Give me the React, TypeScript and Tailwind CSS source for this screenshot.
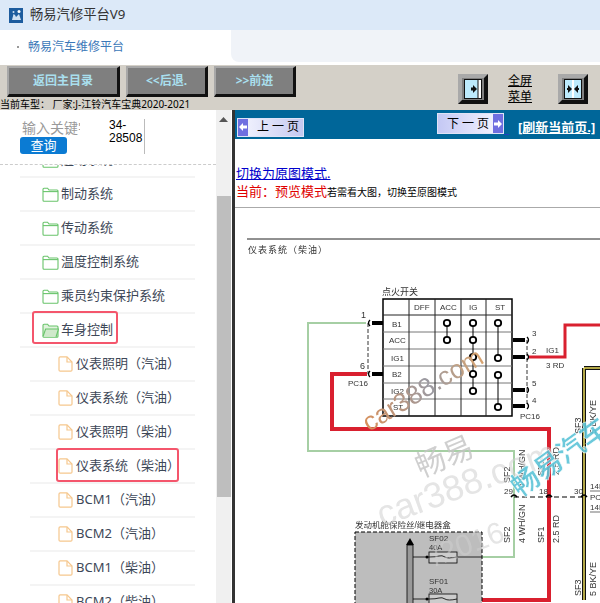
import type { ReactNode } from 'react'

const cjk = "font-['Noto_Sans','Noto_Sans_CJK_SC',sans-serif]"

type TreeRow = { label: string; kind: 'folder' | 'open' | 'file'; mark?: boolean }

const rows: TreeRow[] = [
  { label: '起动系统', kind: 'folder' },
  { label: '制动系统', kind: 'folder' },
  { label: '传动系统', kind: 'folder' },
  { label: '温度控制系统', kind: 'folder' },
  { label: '乘员约束保护系统', kind: 'folder' },
  { label: '车身控制', kind: 'open', mark: true },
  { label: '仪表照明（汽油）', kind: 'file' },
  { label: '仪表系统（汽油）', kind: 'file' },
  { label: '仪表照明（柴油）', kind: 'file' },
  { label: '仪表系统（柴油）', kind: 'file', mark: true },
  { label: 'BCM1（汽油）', kind: 'file' },
  { label: 'BCM2（汽油）', kind: 'file' },
  { label: 'BCM1（柴油）', kind: 'file' },
  { label: 'BCM2（柴油）', kind: 'file' },
]

const FolderIcon = ({ open }: { open?: boolean }) => (
  <svg width="17" height="15" viewBox="0 0 17 15" fill="none" stroke="#69c46b" strokeWidth="1.1" className="shrink-0">
    <path d="M1 13.2V2.2q0-1 1-1h3.6l1.4 1.8h8q1 0 1 1v9.2q0 1-1 1H2q-1 0-1-1z" fill={open ? '#dff2dc' : 'none'} />
    {open ? <path d="M1 13.5 3.6 6h12.9L14 14" fill="#cfe9cb" /> : <path d="M1 4.6h15" />}
  </svg>
)

const FileIcon = () => (
  <svg width="15" height="16" viewBox="0 0 15 16" fill="none" stroke="#f6c78d" strokeWidth="1.2" className="shrink-0">
    <path d="M1 2q0-1.2 1.2-1.2H9L14 6v8q0 1.2-1.2 1.2H2.2Q1 15.2 1 14z" />
    <path d="M9 1v5h5" />
  </svg>
)

const Tree = ({ row }: { row: TreeRow }) => {
  const isFile = row.kind === 'file'
  return (
    <li
      className={
        isFile
          ? 'relative ml-[30px] flex h-[34px] w-[165px] items-center gap-[3px] border-b-2 border-[#f4f4f4] pl-[28px]'
          : 'relative ml-[20px] flex h-[34px] w-[175px] items-center gap-[2px] border-b-2 border-[#f4f4f4] pl-[22px]'
      }
    >
      {isFile ? <FileIcon /> : <FolderIcon open={row.kind === 'open'} />}
      <span className="whitespace-nowrap text-[13px] text-[#3d4757]">{row.label}</span>
      {row.mark ? (
        <span
          className={
            isFile
              ? 'absolute -top-[2px] left-[26px] h-[34px] w-[123px] rounded-[3px] border-2 border-[#f4566c]'
              : 'absolute -top-[3px] left-[12px] h-[33px] w-[86px] rounded-[3px] border-2 border-[#f4566c]'
          }
        />
      ) : null}
    </li>
  )
}

const ToolButton = ({ width, children }: { width: string; children: ReactNode }) => (
  <button
    className={`${width} flex h-[31px] items-center justify-center border-t-2 border-l-2 border-r-[3px] border-b-[3px] border-t-[#a8a8a8] border-l-[#a8a8a8] border-r-[#111] border-b-[#111] bg-[#7f7f7f] text-[12px] font-bold text-[#a9dfee]`}
  >
    {children}
  </button>
)

const PanelIcon = ({ double }: { double?: boolean }) => (
  <div className="flex h-[30px] w-[30px] items-center justify-center border-[4px] border-t-[#a9a9a9] border-l-[#a9a9a9] border-r-[#111] border-b-[#111] bg-[#808080]">
    <svg width="18" height="20" viewBox="0 0 18 20">
      <rect x="0.5" y="0.5" width="17" height="19" fill="#bdeafc" stroke="#111" />
      {double ? (
        <>
          <rect x="8" y="1" width="2" height="18" fill="#fff" />
          <path d="M3 10h1M15 10h-1" stroke="#111" strokeWidth="2" />
          <path d="M4 6l4 4-4 4z" fill="#111" />
          <path d="M14 6l-4 4 4 4z" fill="#111" />
        </>
      ) : (
        <>
          <rect x="14" y="1" width="3" height="18" fill="#fff" />
          <path d="M14 1v18" stroke="#111" />
          <path d="M7 10h2" stroke="#111" strokeWidth="3" />
          <path d="M9 6l4 4-4 4z" fill="#111" />
        </>
      )}
    </svg>
  </div>
)

const PageButton = ({ label, dir }: { label: string; dir: 'prev' | 'next' }) => {
  const arrow = (
    <span className="flex h-full w-[10px] shrink-0 items-center justify-center bg-[#6f6fe0]">
      <svg width="8" height="8" viewBox="0 0 8 8" fill="#fff">
        <path d={dir === 'prev' ? 'M4 0 0 4l4 4V5.500h4v-3H4z' : 'M4 0l4 4-4 4V5.500H0v-3h4z'} />
      </svg>
    </span>
  )
  return (
    <button
      className={
        dir === 'prev'
          ? 'flex h-[19px] w-[67px] items-center border border-[#dfe3f6] bg-gradient-to-r from-[#f6f7ff] to-[#c4c8f0] text-[12px] text-black'
          : 'flex h-[21px] w-[67px] items-center border border-[#dfe3f6] bg-gradient-to-r from-[#c4c8f4] to-[#f8f8ff] text-[12px] text-black'
      }
    >
      {dir === 'prev' ? arrow : null}
      <span className="flex-1 whitespace-nowrap pl-[9px] text-left tracking-[3px]">{label}</span>
      {dir === 'next' ? arrow : null}
    </button>
  )
}

const Pin = ({ x, y, side }: { x: number; y: number; side: 'l' | 'r' }) => (
  <g>
    <path d={side === 'l' ? `M${x} ${y}h11` : `M${x} ${y}h-12`} stroke="#000" strokeWidth="4" />
    <path
      d={side === 'l' ? `M${x - 2} ${y - 3}q-3 3 0 6` : `M${x + 2} ${y - 3}q3 3 0 6`}
      stroke="#000"
      strokeWidth="1.300"
      fill="none"
    />
  </g>
)

const Contact = ({ x, y }: { x: number; y: number }) => (
  <circle cx={x} cy={y} r="3.200" fill="#fff" stroke="#000" strokeWidth="1.800" />
)

const Vert = ({ x, y, t, size = 9 }: { x: number; y: number; t: string; size?: number }) => (
  <text x={x} y={y} fontSize={size} fill="#333" transform={`rotate(-90 ${x} ${y})`}>
    {t}
  </text>
)

const Label = ({ x, y, t, size = 8 }: { x: number; y: number; t: string; size?: number }) => (
  <text x={x} y={y} fontSize={size} fill="#333">
    {t}
  </text>
)

const Wiring = () => {
  const colX = [409, 435, 461, 486]
  const rowY = [315, 332, 349, 366, 383, 399]
  return (
    <svg viewBox="235 235 365 368" width="365" height="368" className="block blur-[0.3px] font-['Liberation_Sans','Noto_Sans_CJK_SC',sans-serif]">
      <defs>
        <linearGradient id="wm" x1="0" x2="1" y1="0" y2="0">
          <stop offset="0" stopColor="#d9905a" />
          <stop offset="0.55" stopColor="#9b9aa2" />
          <stop offset="1" stopColor="#d9a36e" />
        </linearGradient>
      </defs>
      <path d="M247 239H600" stroke="#222" strokeWidth="1" />
      <text x="248" y="253" fontSize="9" letterSpacing="1" fill="#333">
        仪表系统（柴油）
      </text>

      <path d="M366 323H308V451H514V557H482" fill="none" stroke="#a6cfa4" strokeWidth="2" />
      <path d="M367 374H332V429H549V600H482" fill="none" stroke="#d9202f" strokeWidth="4" />
      <path d="M529 357H565V325H600" fill="none" stroke="#d9202f" strokeWidth="3" />
      <path d="M584 368H600M584 368V600" fill="none" stroke="#111" strokeWidth="4" />
      <path d="M584 368H600M584 368V600" fill="none" stroke="#e8d95a" strokeWidth="1.500" />
      <path d="M368 323V374M527 340V406" stroke="#000" strokeWidth="0.800" strokeDasharray="4 2" />
      <path d="M514 497H584" stroke="#000" strokeWidth="1" strokeDasharray="5 3" />
      <path d="M511 497q3-4 6 0M546 497q3-4 6 0M581 497q3-4 6 0" fill="none" stroke="#000" strokeWidth="1.500" />

      <text x="382" y="295" fontSize="9" fill="#333">
        点火开关
      </text>
      <rect x="383" y="299" width="129" height="117" fill="#fff" stroke="#000" strokeWidth="1.500" />
      {rowY.map((y, i) => (
        <path key={y} d={`M383 ${y}H512`} stroke={i === 0 ? '#222' : '#777'} strokeWidth="1" />
      ))}
      {colX.map((x) => (
        <path key={x} d={`M${x} 299V416`} stroke="#222" strokeWidth="1" />
      ))}
      <Label x={414} y={310} t="DFF" />
      <Label x={440} y={310} t="ACC" />
      <Label x={469} y={310} t="IG" />
      <Label x={495} y={310} t="ST" />
      <Label x={392} y={327} t="B1" />
      <Label x={389} y={343} t="ACC" />
      <Label x={391} y={361} t="IG1" />
      <Label x={392} y={377} t="B2" />
      <Label x={391} y={394} t="IG2" />
      <Label x={393} y={410} t="ST" />
      <path d="M447 323V340M473 323V391M498 323V358M498 375V407" stroke="#000" strokeWidth="1" />
      {[
        [447, 323],
        [447, 340],
        [473, 323],
        [473, 340],
        [473, 357],
        [473, 374],
        [473, 391],
        [498, 323],
        [498, 358],
        [498, 375],
        [498, 407],
      ].map(([x, y]) => (
        <Contact key={`${x}-${y}`} x={x} y={y} />
      ))}

      <Pin x={372} y={323} side="l" />
      <Pin x={372} y={374} side="l" />
      <Pin x={525} y={340} side="r" />
      <Pin x={525} y={357} side="r" />
      <Pin x={525} y={390} side="r" />
      <Pin x={525} y={406} side="r" />
      <Label x={361} y={318} t="1" size={9} />
      <Label x={360} y={369} t="6" size={9} />
      <Label x={348} y={386} t="PC16" />
      <Label x={532} y={336} t="3" />
      <Label x={532} y={354} t="2" />
      <Label x={532} y={386} t="5" />
      <Label x={532} y={403} t="4" />
      <Label x={520} y={419} t="PC16" />
      <Label x={546} y={353} t="IG1" />
      <Label x={546} y={368} t="3 RD" />

      <Vert x={510} y={483} t="SF2" />
      <Vert x={525} y={488} t="4 WH/GN" />
      <Vert x={544} y={476} t="SF1" />
      <Vert x={559} y={475} t="2.5 RD" />
      <Vert x={581} y={434} t="SF3" />
      <Vert x={596} y={434} t="5 BK/YE" />
      <Vert x={510} y={543} t="SF2" />
      <Vert x={525} y={543} t="4 WH/GN" />
      <Vert x={544} y={543} t="SF1" />
      <Vert x={559} y={543} t="2.5 RD" />
      <Vert x={581} y={596} t="SF3" />
      <Vert x={596} y={596} t="5 BK/YE" />
      <Label x={504} y={494} t="29" />
      <Label x={539} y={494} t="18" />
      <Label x={574} y={494} t="30" />
      <Label x={590} y={500} t="PC" />
      <Label x={590} y={489} t="14K" />
      <Label x={590} y={510} t="14K" />
      <path d="M590 491H600M590 512H600" stroke="#333" strokeWidth="0.700" />

      <text x="355" y="528" fontSize="8.500" fill="#333">
        发动机舱保险丝/继电器盒
      </text>
      <rect x="355" y="532" width="127" height="75" fill="#bdbdbd" stroke="#000" strokeWidth="1" strokeDasharray="4 2" />
      <path d="M407 545h6v60h-6z" fill="#999" stroke="#000" strokeWidth="0.800" />
      <path d="M410 538l-4 7h8z" fill="#000" />
      <path d="M413 557h16M413 599h16" stroke="#000" strokeWidth="0.800" />
      <circle cx="427" cy="557" r="1.500" fill="#000" />
      <circle cx="427" cy="599" r="1.500" fill="#000" />
      <rect x="429" y="552" width="28" height="11" fill="#ccc" stroke="#000" strokeWidth="0.800" />
      <rect x="429" y="594" width="28" height="11" fill="#ccc" stroke="#000" strokeWidth="0.800" />
      <path d="M429 557q7 0 10-1t6 1 12 0M457 557h25M429 599q7 0 10-1t6 1 12 0" fill="none" stroke="#000" strokeWidth="0.800" />
      <Label x={429} y={541} t="SF02" />
      <Label x={429} y={550} t="40A" size={7.500} />
      <Label x={429} y={584} t="SF01" />
      <Label x={429} y={593} t="30A" size={7.500} />

      <text x="0" y="0" fontSize="26" fill="url(#wm)" transform="translate(369 432) rotate(-31)">
        car388.com
      </text>
      <text x="0" y="0" fontSize="30" fill="#c4c4c4" opacity="0.8" transform="translate(421 478) rotate(-23)">
        畅易
      </text>
      <text x="0" y="0" fontSize="36" fill="#cfcfcf" opacity="0.55" transform="translate(382 527) rotate(-20)">
        car388.com
      </text>
      <text x="0" y="0" fontSize="30" fill="#cfcfcf" opacity="0.55" transform="translate(436 566) rotate(-20)">
        /2016
      </text>
      <text x="0" y="0" fontSize="28" fontWeight="700" fill="#5cc4d8" stroke="#fff" strokeWidth="0.500" opacity="0.9" transform="translate(520 498) rotate(-36)">
        畅易汽车
      </text>
    </svg>
  )
}

export default function App() {
  return (
    <div className={`${cjk} flex h-[603px] w-[600px] flex-col overflow-hidden bg-white text-black`}>
      <header className="flex h-[30px] shrink-0 items-center gap-[7px] bg-[#dce9f8] pl-[9px]">
        <svg width="14" height="15" viewBox="0 0 14 15">
          <rect width="14" height="15" fill="#1d5c9e" />
          <path d="M3 12 4.500 6 6 7l1 2 3-3 2 6z" fill="#cfe0f2" />
          <circle cx="10" cy="3.500" r="1.500" fill="#fff" />
          <circle cx="4.500" cy="4" r="1" fill="#cfe0f2" />
        </svg>
        <span className="text-[13.300px] text-[#333]">畅易汽修平台V9</span>
      </header>

      <div className="flex h-[32px] shrink-0 bg-white">
        <div className="flex w-[231px] items-center pl-[17px] pt-px text-[12px] text-[#3b78b8]">
          <span className="mr-[9px] h-[2px] w-[2px] bg-[#999]" />
          畅易汽车维修平台
        </div>
        <div className="flex-1 rounded-bl-[8px] bg-[#f0f3f8]" />
      </div>

      <div className="h-[3px] shrink-0 bg-white" />

      <div className="relative z-10 flex h-[33px] shrink-0 items-center gap-[6px] bg-[#d4d0c8] pl-[7px] pr-[12px]">
        <ToolButton width="w-[113px]">返回主目录</ToolButton>
        <ToolButton width="w-[82px]">&lt;&lt;后退.</ToolButton>
        <ToolButton width="w-[82px]">&gt;&gt;前进</ToolButton>
        <div className="ml-auto mt-[15px] flex items-center">
          <PanelIcon />
          <span className="ml-[20px] mr-[26px] w-[24px] text-center text-[12px] leading-[16px] underline">
            全屏
            <br />
            菜单
          </span>
          <PanelIcon double />
        </div>
      </div>

      <div className="h-[12px] shrink-0 whitespace-nowrap bg-[#d4d0c8] text-[10px] leading-[13px]">
        当前车型： 厂家:J-江铃汽车宝典2020-2021
      </div>

      <main className="flex min-h-0 flex-1">
        <aside className="flex w-[216px] shrink-0 flex-col overflow-hidden">
          <div className="relative h-[55px] shrink-0 border-b border-dashed border-[#ccc]">
            <div className="flex pl-[22px] pt-[9px]">
              <span className="w-[58px] overflow-hidden whitespace-nowrap text-[14px] leading-[18px] text-[#9a9a9a]">
                输入关键字
              </span>
              <span className="ml-[29px] h-[35px] w-[36px] border-r border-[#bbb] font-['Liberation_Sans',sans-serif] text-[12px] leading-[13px]">
                34-
                <br />
                28508
              </span>
            </div>
            <button className="absolute left-[20px] top-[27px] h-[17px] w-[47px] rounded-[3px] bg-[#0b7bd3] text-[13px] leading-[17px] text-white">
              查询
            </button>
          </div>
          <div className="min-h-0 flex-1 overflow-hidden">
            <ul className="-mt-[21px]">
              {rows.map((row) => (
                <Tree key={row.label} row={row} />
              ))}
            </ul>
          </div>
        </aside>

        <div className="flex w-[15px] shrink-0 flex-col items-center bg-[#f0f0f0]">
          <svg width="9" height="5" viewBox="0 0 9 5" className="mt-[7px] shrink-0">
            <path d="M4.500 0 9 5H0z" fill="#555" />
          </svg>
          <div className="mt-[74px] h-[301px] w-[14px] shrink-0 bg-[#bebebe]" />
        </div>

        <div className="w-px shrink-0 bg-white" />
        <div className="w-[3px] shrink-0 bg-[#333]" />

        <section className="flex min-w-0 flex-1 flex-col">
          <div className="flex h-[29px] shrink-0 items-center bg-[#006699] pl-[2px]">
            <div className="mt-[5px]">
              <PageButton label="上一页" dir="prev" />
            </div>
            <div className="ml-[133px] -mt-[2px]">
              <PageButton label="下一页" dir="next" />
            </div>
            <span className="mt-[20px] h-px w-[5px] shrink-0 bg-[#2040c0]" />
            <a className="ml-[9px] mt-[7px] whitespace-nowrap text-[13px] font-bold text-white underline">
              [刷新当前页.]
            </a>
          </div>
          <a className="mt-[26px] h-[17px] shrink-0 pl-px text-[13px] leading-[17px] text-[#0000cc] underline">
            切换为原图模式.
          </a>
          <p className="h-[17px] shrink-0 pl-px leading-[17px]">
            <span className="text-[13px] text-[#e00000]">当前：预览模式</span>
            <span className="text-[10px] text-black">若需看大图，切换至原图模式</span>
          </p>
          <div className="mt-[8px] h-px shrink-0 bg-[#aaa]" />
          <div className="mt-[27px] min-h-0">
            <Wiring />
          </div>
        </section>
      </main>
    </div>
  )
}
